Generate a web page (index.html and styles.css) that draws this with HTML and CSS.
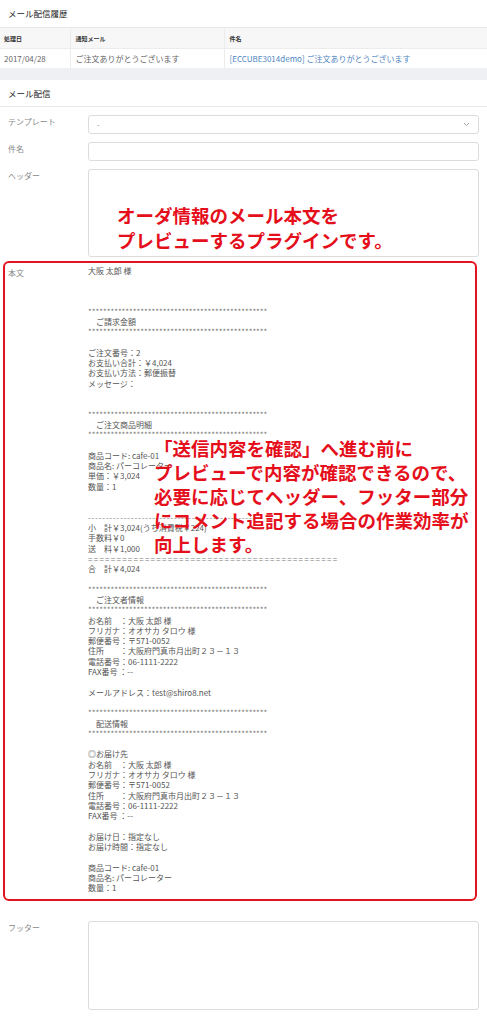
FILE: index.html
```html
<!DOCTYPE html>
<html lang="ja">

<head>
    <meta charset="UTF-8">
    <meta name="viewport" content="width=device-width, initial-scale=1.0">
    <title>メール配信</title>
    <link rel="stylesheet" href="styles.css">
</head>

<body>
    <section class="card">
        <h2 class="card-title">メール配信履歴</h2>
        <table class="history">
            <thead>
                <tr>
                    <th class="col-date">処理日</th>
                    <th class="col-mail">通知メール</th>
                    <th>件名</th>
                </tr>
            </thead>
            <tbody>
                <tr>
                    <td>2017/04/28</td>
                    <td>ご注文ありがとうございます</td>
                    <td><a class="link" href="#">[ECCUBE3014demo] ご注文ありがとうございます</a></td>
                </tr>
            </tbody>
        </table>
    </section>

    <div class="band"></div>

    <section class="card">
        <h2 class="card-title bordered">メール配信</h2>
        <div class="form">
            <div class="form-row">
                <label class="form-label">テンプレート</label>
                <div class="select">
                    <span>-</span>
                    <svg class="chevron" width="7" height="5" viewBox="0 0 7 5">
                        <polyline points="1,1 3.5,3.5 6,1" fill="none" stroke="#999" stroke-width="0.9" />
                    </svg>
                </div>
            </div>
            <div class="form-row">
                <label class="form-label">件名</label>
                <div class="input"></div>
            </div>
            <div class="form-row header-row">
                <label class="form-label">ヘッダー</label>
                <div class="textarea header-area"></div>
            </div>

            <div class="preview">
                <label class="form-label">本文</label>
                <div class="mail-body">大阪 太郎 様



<span class="stars">************************************************</span>
　ご請求金額
<span class="stars">************************************************</span>

ご注文番号：2
お支払い合計：￥4,024
お支払い方法：郵便振替
メッセージ：


<span class="stars">************************************************</span>
　ご注文商品明細
<span class="stars">************************************************</span>

商品コード: cafe-01
商品名: パーコレーター
単価：￥3,024
数量：1


<span class="dashes">-------------------------------------------------</span>
小　計￥3,024(うち消費税￥224)
手数料￥0
送　料￥1,000
<span class="equals">============================================</span>
合　計￥4,024

<span class="stars">************************************************</span>
　ご注文者情報
<span class="stars">************************************************</span>
お名前　：大阪 太郎 様
フリガナ：オオサカ タロウ 様
郵便番号：〒571-0052
住所　　：大阪府門真市月出町２３－１３
電話番号：06-1111-2222
FAX番号 ：--

メールアドレス：test@shiro8.net

<span class="stars">************************************************</span>
　配送情報
<span class="stars">************************************************</span>

◎お届け先
お名前　：大阪 太郎 様
フリガナ：オオサカ タロウ 様
郵便番号：〒571-0052
住所　　：大阪府門真市月出町２３－１３
電話番号：06-1111-2222
FAX番号 ：--

お届け日：指定なし
お届け時間：指定なし

商品コード: cafe-01
商品名: パーコレーター
数量：1</div>
            </div>

            <div class="form-row footer-row">
                <label class="form-label">フッター</label>
                <div class="textarea footer-area"></div>
            </div>
        </div>
    </section>

    <p class="note note-top">オーダ情報のメール本文を<br>プレビューするプラグインです。</p>
    <p class="note note-body">「送信内容を確認」へ進む前に<br>プレビューで内容が確認できるので、<br>必要に応じてヘッダー、フッター部分<br>にコメント追記する場合の作業効率が<br>向上します。</p>
</body>

</html>
```

FILE: styles.css
```css
* {
    box-sizing: border-box;
}

html {
    overflow: hidden;
}

body {
    margin: 0;
    position: relative;
    background: #fff;
    color: #555;
    font-family: "Noto Sans CJK JP", "Noto Sans", sans-serif;
}

.card-title {
    margin: 0;
    height: 27px;
    line-height: 27px;
    padding-left: 8px;
    font-size: 8.5px;
    font-weight: normal;
    color: #222;
}

.card-title.bordered {
    height: 27px;
    border-bottom: 1px solid #ebebeb;
}

.history {
    width: 100%;
    border-collapse: collapse;
}

.history th {
    height: 21px;
    background: #f7f7f7;
    border-top: 1px solid #e8e8e8;
    border-bottom: 1px solid #ececec;
    font-size: 6px;
    font-weight: bold;
    color: #333;
    text-align: left;
    padding: 0 5px;
}

.history td {
    height: 19px;
    font-size: 8px;
    color: #666;
    padding: 0 5px;
}

.history th,
.history td {
    border-right: 1px solid #ececec;
}

.history th:last-child,
.history td:last-child {
    border-right: none;
}

.history th:first-child,
.history td:first-child {
    padding-left: 4px;
}

.col-date {
    width: 70px;
}

.col-mail {
    width: 154px;
}

.link {
    color: #4f86c0;
    text-decoration: none;
}

.band {
    height: 12px;
    background: #eef0f3;
}

.form {
    padding-top: 8px;
}

.form-row {
    display: grid;
    grid-template-columns: 88px 391px;
    margin-bottom: 8px;
}

.form-row.header-row {
    margin-bottom: 4px;
}

.form-label {
    padding: 2px 0 0 8px;
    font-size: 8px;
    line-height: 10px;
    color: #888;
}

.select,
.input,
.textarea {
    border: 1px solid #dcdcdc;
    border-radius: 3px;
    background: #fff;
}

.select,
.input {
    height: 19px;
}

.select {
    display: flex;
    align-items: center;
    justify-content: space-between;
    padding: 0 8px;
    font-size: 8px;
    color: #999;
}

.header-area {
    height: 88px;
}

.footer-area {
    height: 89px;
}

.preview {
    display: grid;
    grid-template-columns: 83px 1fr;
    width: 474px;
    margin-left: 3px;
    padding-bottom: 5px;
    border: 2px solid #e3141f;
    border-radius: 6px;
}

.preview .form-label {
    padding: 5px 0 0 3px;
}

.mail-body {
    padding-top: 3px;
    white-space: pre-wrap;
    font-size: 8px;
    line-height: 10.3px;
    color: #555;
}

.stars {
    color: #777;
}

.dashes {
    letter-spacing: 0.8px;
    color: #777;
}

.equals {
    letter-spacing: 1.25px;
    color: #777;
}

.footer-row {
    margin-top: 20px;
}

.note {
    position: absolute;
    margin: 0;
    color: #e50f1c;
    font-weight: bold;
    font-size: 18.5px;
    white-space: nowrap;
}

.note-top {
    left: 117px;
    top: 203px;
    line-height: 25px;
}

.note-body {
    left: 154px;
    top: 436px;
    line-height: 24px;
}
```
